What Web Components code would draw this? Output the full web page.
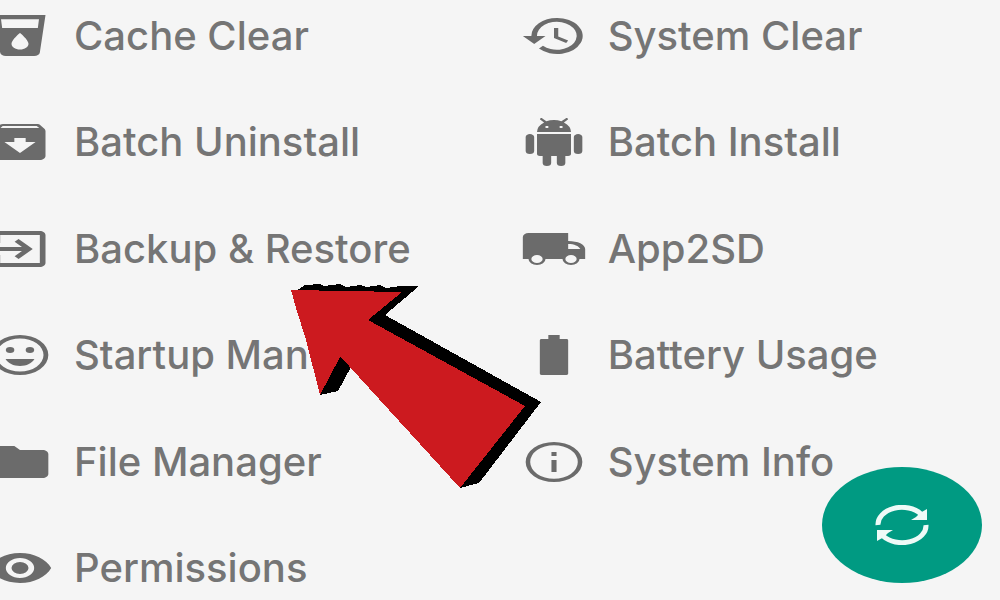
<!DOCTYPE html>
<html lang="en">
<head>
<meta charset="utf-8">
<meta name="viewport" content="width=device-width, initial-scale=1">
<title>Toolbox</title>
<style>
  body {
    margin: 0;
    overflow: hidden;
    background-color: #f5f5f5;
    color: #757575;
    font-family: Inter, Roboto, sans-serif;
    font-weight: 500;
  }
</style>
</head>
<body>
<tool-menu>
  <tool-item icon="cache">Cache Clear</tool-item>
  <tool-item icon="history">System Clear</tool-item>
  <tool-item icon="archive">Batch Uninstall</tool-item>
  <tool-item icon="android">Batch Install</tool-item>
  <tool-item icon="exit">Backup &amp; Restore</tool-item>
  <tool-item icon="truck">App2SD</tool-item>
  <tool-item icon="smile">Startup Man</tool-item>
  <tool-item icon="battery">Battery Usage</tool-item>
  <tool-item icon="folder">File Manager</tool-item>
  <tool-item icon="info">System Info</tool-item>
  <tool-item icon="eye">Permissions</tool-item>
</tool-menu>
<pointer-arrow></pointer-arrow>
<refresh-button></refresh-button>

<script>
(function initToolbox() {
  const ICONS = {
    cache: `<path fill-rule="evenodd" d="M3 1.500l2 18.800c.1 1 1 1.700 2 1.700h10c1 0 1.900-.7 2-1.700L21 1.500H3zm9 17.300c-1.700 0-3-1.300-3-2.900 0-2 3-5.400 3-5.400s3 3.400 3 5.400c0 1.600-1.300 2.900-3 2.900zM18.300 8H5.700l-.4-4.400h13.400l-.4 4.400z"/>`,
    history: `<path d="M13 3a9 9 0 0 0-9 9H1l3.900 3.900.1.100L9 12H6a7 7 0 1 1 2.100 4.900l-1.400 1.400A9 9 0 1 0 13 3zm-1 5v5l4.300 2.500.7-1.200-3.500-2.100V8H12z"/>`,
    archive: `<path fill-rule="evenodd" d="M20.500 5.200l-1.400-1.700C18.900 3.200 18.500 3 18 3H6c-.5 0-.9.200-1.200.5L3.500 5.200C3.200 5.600 3 6 3 6.500V19c0 1.100.9 2 2 2h14c1.100 0 2-.9 2-2V6.500c0-.5-.2-.9-.5-1.300zM12 17.500L6.500 12H10v-2h4v2h3.500L12 17.500zM5.100 5l.8-1h12l.9 1H5.100z"/>`,
    android: `<path fill-rule="evenodd" d="M6 18c0 .6.500 1 1 1h1v3.500a1.500 1.500 0 0 0 3 0V19h2v3.500a1.500 1.500 0 0 0 3 0V19h1c.5 0 1-.4 1-1V8H6v10zM3.500 8C2.700 8 2 8.700 2 9.500v7a1.500 1.500 0 0 0 3 0v-7C5 8.700 4.300 8 3.500 8zm17 0c-.8 0-1.500.7-1.500 1.500v7a1.500 1.500 0 0 0 3 0v-7c0-.8-.7-1.500-1.500-1.500zm-5-5.800l1.300-1.300c.2-.2.2-.5 0-.7s-.5-.2-.7 0l-1.500 1.400A6 6 0 0 0 12 1c-1 0-1.900.200-2.700.600L7.900.200c-.2-.2-.5-.2-.7 0s-.2.500 0 .7l1.300 1.300A6 6 0 0 0 6 7h12a6 6 0 0 0-2.500-4.800zM10 5H9V4h1v1zm5 0h-1V4h1v1z"/>`,
    exit: `<path d="M10.100 15.600l1.400 1.400 5-5-5-5-1.400 1.400L12.700 11H3v2h9.700l-2.600 2.600zM19 3H5a2 2 0 0 0-2 2v4h2V5h14v14H5v-4H3v4c0 1.100.9 2 2 2h14c1.100 0 2-.9 2-2V5c0-1.100-.9-2-2-2z"/>`,
    truck: `<path fill-rule="evenodd" d="M17 4H3a2 2 0 0 0-2 2v11h2a3 3 0 0 0 6 0h6a3 3 0 0 0 6 0h2v-5c0-2.200-2.500-4-6-4V4zM6 19a2 2 0 1 1 0-4 2 2 0 0 1 0 4zm12 0a2 2 0 1 1 0-4 2 2 0 0 1 0 4zm-1-7V9.500c2.200 0 3.700 1 4.300 2.500H17z"/>`,
    smile: `<path fill-rule="evenodd" d="M12 2a10 10 0 1 0 0 20 10 10 0 0 0 0-20zm0 18.300a8.300 8.300 0 1 1 0-16.600 8.300 8.300 0 0 1 0 16.600z"/><circle cx="8.500" cy="9.500" r="1.500"/><circle cx="15.500" cy="9.500" r="1.500"/><path d="M6.900 14h10.200c-.8 2.100-2.800 3.500-5.100 3.500S7.700 16.100 6.900 14z"/>`,
    battery: `<path d="M16.400 4H14V2h-4v2H7.600c-.4 0-.6.300-.6.700v16.600c0 .4.200.7.600.7h8.800c.4 0 .6-.3.600-.7V4.700c0-.4-.2-.7-.6-.7z"/>`,
    folder: `<path d="M10 4H4a2 2 0 0 0-2 2v12c0 1.100.9 2 2 2h16c1.100 0 2-.9 2-2V8c0-1.100-.9-2-2-2h-8l-2-2z"/>`,
    info: `<path fill-rule="evenodd" d="M12 2a10 10 0 1 0 0 20 10 10 0 0 0 0-20zm0 18.400a8.400 8.400 0 1 1 0-16.800 8.400 8.400 0 0 1 0 16.800zM11.100 11h1.800v6h-1.800zM11.100 7h1.800v2h-1.800z"/>`,
    eye: `<path fill-rule="evenodd" d="M12 4.500C7 4.500 2.700 7.600 1 12c1.700 4.400 6 7.500 11 7.500s9.300-3.100 11-7.500c-1.700-4.400-6-7.500-11-7.500zM12 17a5 5 0 1 1 0-10 5 5 0 0 1 0 10zm0-8a3 3 0 1 0 0 6 3 3 0 0 0 0-6z"/>`
  };

  class ToolMenu extends HTMLElement {
    constructor() {
      super();
      this.attachShadow({ mode: "open" });
      this.shadowRoot.innerHTML = `<style>
        :host {
          display: block;
        }
        /* the list is scrolled a little past its left edge */
        .menu {
          box-sizing: border-box;
          min-height: 100vh;
          margin-left: -14px;
          padding-top: 4px;
          display: grid;
          grid-template-columns: 10fr 9fr;
          grid-auto-rows: 64px;
          align-content: space-between;
        }
      </style>
      <nav class="menu" aria-label="Tools"><slot></slot></nav>`;
    }
  }

  class ToolItem extends HTMLElement {
    constructor() {
      super();
      this.attachShadow({ mode: "open" });
      this.shadowRoot.innerHTML = `<style>
        :host {
          display: flex;
          min-width: 0;
        }
        .item {
          display: flex;
          align-items: center;
          gap: 20px;
          color: inherit;
          font-size: 40px;
          line-height: 48px;
          white-space: nowrap;
          text-decoration: none;
        }
        .item__icon {
          flex: none;
          width: 68px;
          height: 48px;
          fill: #6b6b6b;
        }
      </style>
      <a class="item" href="#">
        <svg class="item__icon" viewBox="0 0 24 24" preserveAspectRatio="none" aria-hidden="true">${ICONS[this.getAttribute("icon")] || ""}</svg>
        <span><slot></slot></span>
      </a>`;
    }
  }

  class RefreshButton extends HTMLElement {
    constructor() {
      super();
      this.attachShadow({ mode: "open" });
      this.shadowRoot.innerHTML = `<style>
        :host {
          position: fixed;
          right: 18px;
          bottom: 17px;
        }
        .fab {
          display: flex;
          align-items: center;
          justify-content: center;
          width: 160px;
          height: 116px;
          padding: 0;
          border: 0;
          border-radius: 50%;
          background-color: #009a82;
          cursor: pointer;
        }
        .fab__icon {
          width: 54px;
          height: 40px;
        }
      </style>
      <button class="fab" type="button" aria-label="Refresh">
        <svg class="fab__icon" viewBox="0 0 54 40" aria-hidden="true">
          <g fill="none" stroke="#eefaf7" stroke-width="5">
            <path d="M3 20A24 17 0 0 1 46 9"/>
            <path d="M51 20A24 17 0 0 1 8 31"/>
          </g>
          <path fill="#eefaf7" d="M52 4v11H36l5-3 4-4zM2 36V25h16l-5 3-4 4z"/>
        </svg>
      </button>`;
    }
  }

  class PointerArrow extends HTMLElement {
    constructor() {
      super();
      this.attachShadow({ mode: "open" });
      this.shadowRoot.innerHTML = `<style>
        :host {
          position: absolute;
          left: 290px;
          top: 282px;
          pointer-events: none;
        }
        .arrow {
          display: block;
          width: 254px;
          height: 208px;
        }
      </style>
      <svg class="arrow" viewBox="290 282 254 208" shape-rendering="crispEdges" aria-hidden="true">
        <path d="M296 291L305 285 320 284 324 286 340 284 346 287 360 285 366 287 380 285 386 288 400 286 419 286 385 315 541 402 479 483 460 488 400 400 351 367 338 391 320 395 330 340z"/>
        <path fill="#cc1a1f" d="M291 290L402 292 368 320 525 406 460 488 349 366 340 357 320 395 306 340 296 308z"/>
      </svg>`;
    }
  }

  customElements.define("tool-menu", ToolMenu);
  customElements.define("tool-item", ToolItem);
  customElements.define("refresh-button", RefreshButton);
  customElements.define("pointer-arrow", PointerArrow);
})();
</script>
</body>
</html>
